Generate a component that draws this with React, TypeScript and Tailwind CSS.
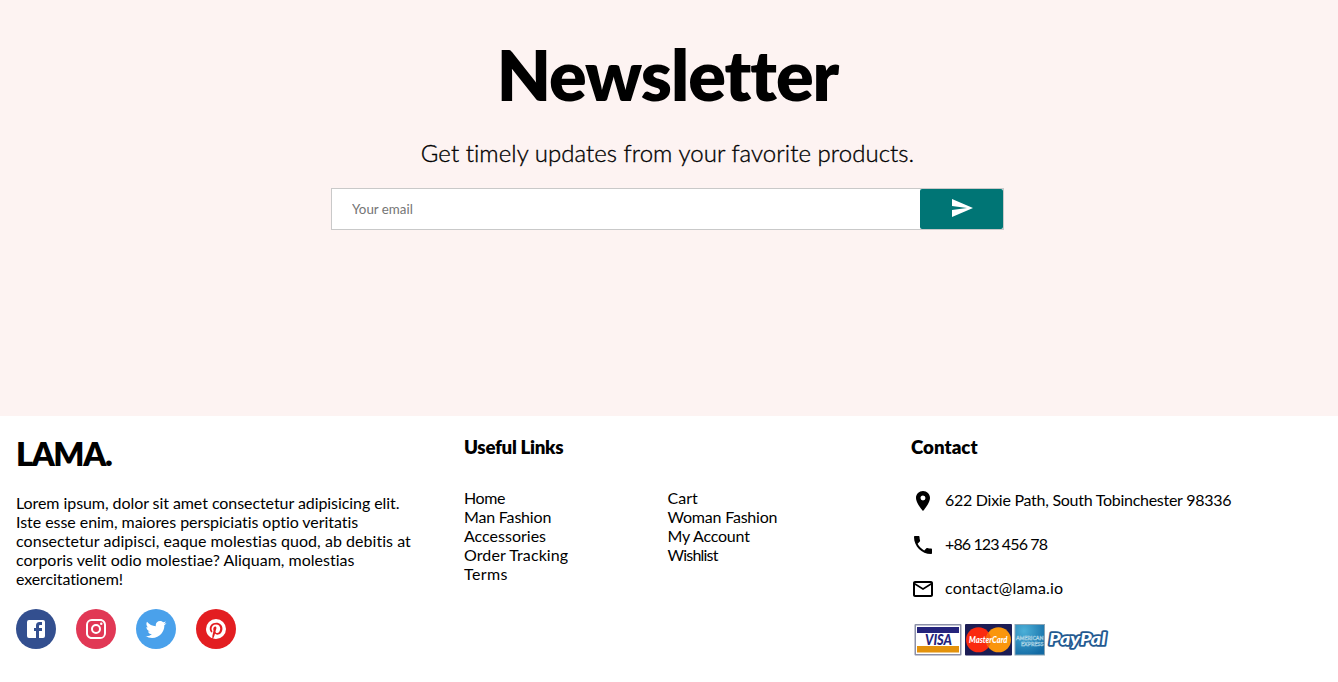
import { MdMailOutline, MdPhone, MdRoom, MdSend } from "react-icons/md";

interface Social {
  id: string;
  className: string;
  path: string;
}

interface TextItem {
  title: string;
  className: string;
}

interface ContactItem extends TextItem {
  icon: React.ReactNode;
}

const SOCIALS: Social[] = [
  {
    id: "facebook",
    className: "bg-[#334f8f]",
    path: "M5 3h14a2 2 0 0 1 2 2v14a2 2 0 0 1-2 2H5a2 2 0 0 1-2-2V5a2 2 0 0 1 2-2m13 2h-2.5A3.5 3.5 0 0 0 12 8.5V11h-2v3h2v7h3v-7h3v-3h-3V9a1 1 0 0 1 1-1h2V5z",
  },
  {
    id: "instagram",
    className: "bg-[#e13855]",
    path: "M7.8 2h8.4C19.4 2 22 4.6 22 7.8v8.4a5.8 5.8 0 0 1-5.8 5.8H7.8C4.6 22 2 19.4 2 16.2V7.8A5.8 5.8 0 0 1 7.8 2m-.2 2A3.6 3.6 0 0 0 4 7.6v8.8C4 18.39 5.61 20 7.6 20h8.8a3.6 3.6 0 0 0 3.6-3.6V7.6C20 5.61 18.39 4 16.4 4H7.6m9.65 1.5a1.25 1.25 0 0 1 1.25 1.25A1.25 1.25 0 0 1 17.25 8 1.25 1.25 0 0 1 16 6.75a1.25 1.25 0 0 1 1.25-1.25M12 7a5 5 0 0 1 5 5 5 5 0 0 1-5 5 5 5 0 0 1-5-5 5 5 0 0 1 5-5m0 2a3 3 0 0 0-3 3 3 3 0 0 0 3 3 3 3 0 0 0 3-3 3 3 0 0 0-3-3z",
  },
  {
    id: "twitter",
    className: "bg-[#4aa1eb]",
    path: "M22.46 6c-.77.35-1.6.58-2.46.69.88-.53 1.56-1.37 1.88-2.38-.83.5-1.75.85-2.72 1.05C18.37 4.5 17.26 4 16 4c-2.35 0-4.27 1.92-4.27 4.29 0 .34.04.67.11.98C8.28 9.09 5.11 7.38 3 4.79c-.37.63-.58 1.37-.58 2.15 0 1.49.75 2.81 1.91 3.56-.71 0-1.37-.2-1.95-.5v.03c0 2.08 1.48 3.82 3.44 4.21a4.22 4.22 0 0 1-1.93.07 4.28 4.28 0 0 0 4 2.98 8.521 8.521 0 0 1-5.33 1.84c-.34 0-.68-.02-1.02-.06C3.44 20.29 5.7 21 8.12 21 16 21 20.33 14.46 20.33 8.79c0-.19 0-.37-.01-.56.84-.6 1.56-1.36 2.14-2.23z",
  },
  {
    id: "pinterest",
    className: "bg-[#e31e21]",
    path: "M9.04 21.54c.96.29 1.93.46 2.96.46a10 10 0 0 0 10-10A10 10 0 0 0 12 2 10 10 0 0 0 2 12c0 4.25 2.67 7.9 6.44 9.34-.09-.78-.18-2.07 0-2.96l1.15-4.94s-.29-.58-.29-1.5c0-1.38.86-2.41 1.84-2.41.86 0 1.26.63 1.26 1.44 0 .86-.57 2.09-.86 3.27-.17.98.52 1.84 1.52 1.84 1.78 0 3.16-1.9 3.16-4.58 0-2.4-1.72-4.04-4.19-4.04-2.82 0-4.48 2.1-4.48 4.31 0 .86.28 1.73.74 2.3.09.06.09.14.06.29l-.29 1.09c0 .17-.11.23-.28.11-1.28-.56-2.02-2.38-2.02-3.85 0-3.16 2.24-6.03 6.56-6.03 3.44 0 6.12 2.47 6.12 5.75 0 3.44-2.13 6.2-5.18 6.2-.97 0-1.92-.52-2.26-1.13l-.67 2.37c-.23.86-.86 2.01-1.29 2.7v-.03z",
  },
];

const DESCRIPTION: TextItem[] = [
  {
    title: "Lorem ipsum, dolor sit amet consectetur adipisicing elit.",
    className: "tracking-[-0.07px]",
  },
  {
    title: "Iste esse enim, maiores perspiciatis optio veritatis",
    className: "tracking-[-0.05px]",
  },
  {
    title: "consectetur adipisci, eaque molestias quod, ab debitis at",
    className: "tracking-[0.045px]",
  },
  {
    title: "corporis velit odio molestiae? Aliquam, molestias",
    className: "tracking-normal",
  },
  { title: "exercitationem!", className: "tracking-[-0.1px]" },
];

const LINKS: TextItem[] = [
  { title: "Home", className: "tracking-[-0.4px]" },
  { title: "Cart", className: "tracking-normal" },
  { title: "Man Fashion", className: "tracking-[-0.18px]" },
  { title: "Woman Fashion", className: "tracking-[-0.2px]" },
  { title: "Accessories", className: "tracking-normal" },
  { title: "My Account", className: "tracking-[-0.2px]" },
  { title: "Order Tracking", className: "tracking-[0.1px]" },
  { title: "Wishlist", className: "tracking-[-0.8px]" },
  { title: "Terms", className: "tracking-[0.4px]" },
];

const CONTACTS: ContactItem[] = [
  {
    title: "622 Dixie Path, South Tobinchester 98336",
    className: "tracking-[-0.27px]",
    icon: <MdRoom className="size-6" />,
  },
  {
    title: "+86 123 456 78",
    className: "tracking-[-0.88px]",
    icon: <MdPhone className="size-6" />,
  },
  {
    title: "contact@lama.io",
    className: "tracking-[0.2px]",
    icon: <MdMailOutline className="size-6" />,
  },
];

function Newsletter() {
  return (
    <section className="flex h-[416px] flex-col items-center bg-[#fdf3f2] pt-8 pr-[3px]">
      <h1 className="mb-[22px] text-[70px] leading-[84px] font-extrabold tracking-[-1px]">
        Newsletter
      </h1>
      <p className="mb-5 text-2xl leading-[30px] font-light tracking-[0.045px] [-webkit-text-stroke:0.35px_black]">
        Get timely updates from your favorite products.
      </p>
      <form className="flex h-[42px] w-[673px] border border-[#c9c9c9] bg-white">
        <input
          className="min-w-0 flex-1 pt-0.5 pl-5 text-[13.33px] outline-none placeholder:text-[#757575]"
          placeholder="Your email"
        />
        <button
          type="button"
          className="flex w-[83px] justify-center rounded-[2px] bg-[#007575] pt-[7px] text-white"
        >
          <MdSend className="size-6" />
        </button>
      </form>
    </section>
  );
}

function Payments() {
  return (
    <svg
      className="ml-[3px]"
      width="196"
      height="34"
      viewBox="0 0 196 34"
      fontFamily="Lato, sans-serif"
    >
      {/* Visa */}
      <rect x="0.5" y="1" width="47" height="31.5" rx="1" fill="#8b90a8" />
      <rect x="2" y="2.5" width="44" height="28.5" fill="#fff" />
      <rect x="3" y="4" width="42" height="6" fill="#24247c" />
      <rect x="3" y="23" width="42" height="6.5" fill="#e3920c" />
      <text
        x="11"
        y="21.7"
        fontSize="14.5"
        fontWeight="900"
        fontStyle="italic"
        textLength="27"
        lengthAdjust="spacingAndGlyphs"
        fill="#24247c"
      >
        VISA
      </text>
      {/* MasterCard */}
      <rect x="51" y="1" width="47" height="31.5" rx="1" fill="#1c1d54" />
      <circle cx="64.5" cy="16.8" r="12.5" fill="#fa2a10" />
      <circle cx="84.5" cy="16.8" r="12.5" fill="#fa960c" />
      <path d="M74.5 9.3a12.5 12.5 0 0 1 0 15 12.5 12.5 0 0 1 0-15z" fill="#f4600e" />
      <text
        x="55"
        y="19.8"
        fontSize="8.5"
        fontWeight="900"
        fontStyle="italic"
        textLength="38.5"
        lengthAdjust="spacingAndGlyphs"
        fill="#fff"
      >
        MasterCard
      </text>
      {/* American Express */}
      <defs>
        <radialGradient id="amex" cx="0.3" cy="0.2" r="0.9">
          <stop offset="0" stopColor="#4cb0d8" />
          <stop offset="1" stopColor="#126aa4" />
        </radialGradient>
      </defs>
      <rect x="100.5" y="1" width="30.5" height="31.5" fill="#8aa4b4" />
      <rect x="101.5" y="2" width="28.5" height="29.5" fill="url(#amex)" />
      <g fontSize="5.2" fontWeight="700" fill="#3a8fbc" stroke="#b9dcea" strokeWidth="0.4">
        <text x="102" y="17" textLength="27.5" lengthAdjust="spacingAndGlyphs">
          AMERICAN
        </text>
        <text x="107" y="22.5" textLength="22.5" lengthAdjust="spacingAndGlyphs">
          EXPRESS
        </text>
      </g>
      {/* PayPal */}
      <text
        x="135"
        y="22"
        fontSize="17.5"
        fontWeight="900"
        fontStyle="italic"
        textLength="57"
        lengthAdjust="spacingAndGlyphs"
        fill="#fff"
        stroke="#235a91"
        strokeWidth="3.6"
        strokeLinejoin="round"
        paintOrder="stroke"
      >
        PayPal
      </text>
    </svg>
  );
}

function Footer() {
  return (
    <footer className="flex h-[266px] bg-white pl-4 leading-[19px]">
      <div className="w-[448px] shrink-0 pt-[19px]">
        <h1 className="text-[32.5px] leading-[38px] font-extrabold tracking-[-1.4px]">
          LAMA.
        </h1>
        <div className="mt-5 mb-[21px]">
          {DESCRIPTION.map((line) => (
            <p key={line.title} className={`whitespace-nowrap ${line.className}`}>
              {line.title}
            </p>
          ))}
        </div>
        <div className="flex gap-5">
          {SOCIALS.map((social) => (
            <div
              key={social.id}
              className={`flex size-10 items-center justify-center rounded-full text-white ${social.className}`}
            >
              <svg className="size-6" viewBox="0 0 24 24" fill="currentColor">
                <path d={social.path} />
              </svg>
            </div>
          ))}
        </div>
      </div>

      <div className="w-[447px] shrink-0 pt-[19px]">
        <h3 className="mb-[29px] text-[18.72px] leading-6 font-extrabold tracking-[-0.3px]">
          Useful Links
        </h3>
        <ul className="grid w-[407px] grid-cols-2">
          {LINKS.map((link) => (
            <li key={link.title} className={link.className}>
              {link.title}
            </li>
          ))}
        </ul>
      </div>

      <div className="flex-1 pt-[19px]">
        <h3 className="mb-[30px] text-[18.72px] leading-6 font-extrabold">
          Contact
        </h3>
        {CONTACTS.map((contact) => (
          <div
            key={contact.title}
            className="mb-5 flex h-6 items-center gap-2.5"
          >
            {contact.icon}
            <span className={`pb-[3px] ${contact.className}`}>
              {contact.title}
            </span>
          </div>
        ))}
        <div className="pt-0.5">
          <Payments />
        </div>
      </div>
    </footer>
  );
}

export default function App() {
  return (
    <div className="w-full overflow-hidden font-['Lato',sans-serif] text-black [font-variant-ligatures:none]">
      <Newsletter />
      <Footer />
    </div>
  );
}
